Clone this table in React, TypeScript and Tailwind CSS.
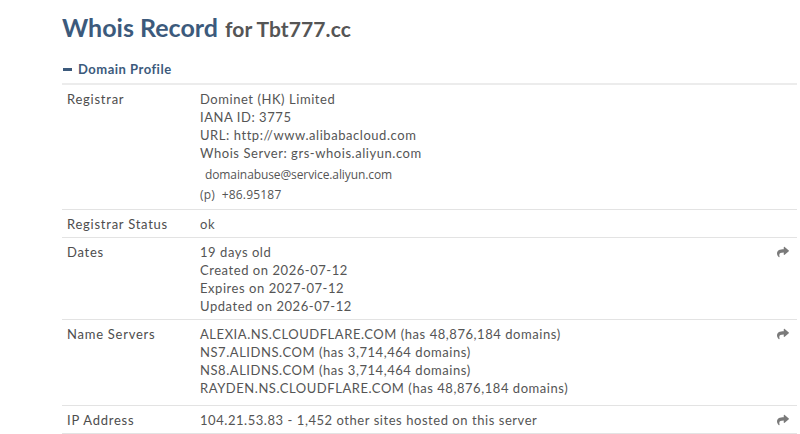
import { FaShare } from 'react-icons/fa'

type Row = {
  label: string
  lines: React.ReactNode[]
  share?: boolean
  spaced?: boolean
}

const rows: Row[] = [
  {
    label: 'Registrar',
    lines: [
      'Dominet (HK) Limited',
      'IANA ID: 3775',
      'URL: http://www.alibabacloud.com',
      'Whois Server: grs-whois.aliyun.com',
      <span key="mail" className="block pt-[4px] pl-[5px] font-['Open_Sans',sans-serif] text-[12px] tracking-[-0.1px]">
        domainabuse@service.aliyun.com
      </span>,
      <span key="phone" className="block pt-[1px] font-['Open_Sans',sans-serif] text-[12px] leading-[20px] tracking-[0.2px]">
        (p)&nbsp; +86.95187
      </span>,
    ],
  },
  { label: 'Registrar Status', lines: ['ok'] },
  {
    label: 'Dates',
    share: true,
    lines: ['19 days old', 'Created on 2026-07-12', 'Expires on 2027-07-12', 'Updated on 2026-07-12'],
  },
  {
    label: 'Name Servers',
    share: true,
    spaced: true,
    lines: [
      'ALEXIA.NS.CLOUDFLARE.COM (has 48,876,184 domains)',
      'NS7.ALIDNS.COM (has 3,714,464 domains)',
      'NS8.ALIDNS.COM (has 3,714,464 domains)',
      'RAYDEN.NS.CLOUDFLARE.COM (has 48,876,184 domains)',
    ],
  },
  { label: 'IP Address', share: true, lines: ['104.21.53.83 - 1,452 other sites hosted on this server'] },
]

export default function App() {
  return (
    <div className="min-h-screen w-full bg-white pt-[12px] pr-[3px] pl-[62px] font-['Lato',sans-serif] text-[#555]">
      <h1 className="flex items-baseline gap-[7px] leading-[30px]">
        <span className="text-[25px] font-bold text-[#3c5a7c]">Whois Record</span>
        <span className="text-[21px] font-bold tracking-[0.1px] text-[#555]">for Tbt777.cc</span>
      </h1>

      <div className="mt-[17px] flex items-center gap-[6px] pb-[6px] pl-[1px] text-[13px] leading-[16px] font-bold tracking-[0.5px] text-[#3c5a7c]">
        <span className="mt-[1px] h-[3px] w-[9px] bg-[#3c5a7c]" />
        Domain Profile
      </div>

      <div className="border-t-2 border-[#ececec]">
        {rows.map((row) => (
          <div
            key={row.label}
            className={`flex border-b border-[#e3e3e3] pt-[5px] text-[13px] leading-[18px] ${row.spaced ? 'pb-[8px]' : 'pb-[4px]'}`}
          >
            <div className="w-[138px] shrink-0 pl-[5px] tracking-[0.75px] text-[#4d4d4d]">{row.label}</div>
            <div className="flex-1 tracking-[0.55px]">
              {row.lines.map((line, i) => (
                <div key={i}>{line}</div>
              ))}
            </div>
            {row.share ? (
              <div className="w-[20px] shrink-0 pt-[3px] text-[#7a7a7a]">
                <FaShare size={12} />
              </div>
            ) : null}
          </div>
        ))}
      </div>
    </div>
  )
}
